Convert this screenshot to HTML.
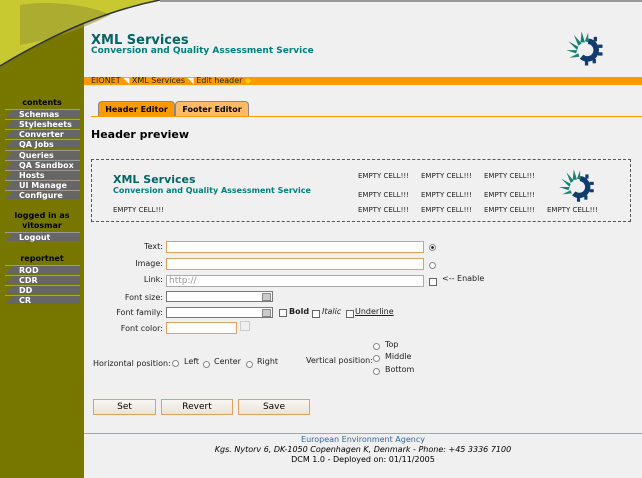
<!DOCTYPE html>
<html><head><style>
body{margin:0;width:642px;height:478px;background:#f0f0f0;font-family:Verdana,"DejaVu Sans",sans-serif;position:relative;overflow:hidden;font-size:8px}
.a{position:absolute}
.side{left:0;top:0;width:84px;height:478px;background:#777700}
.btn{position:absolute;left:5px;width:75px;height:9px;background:#666;color:#fff;font-weight:bold;font-size:8px;line-height:9px;padding-left:14px;box-sizing:border-box;border-top:1px solid #999}
.btn:before{content:"";position:absolute;left:0;top:0;border-left:8px solid #777700;border-bottom:8px solid transparent}
.lbl{position:absolute;left:0;width:84px;text-align:center;font-weight:bold;font-size:8px;color:#000}
.inp{position:absolute;background:#fff;border:1px solid #e0a060;height:12px;box-sizing:border-box}
.r{position:absolute;width:7px;height:7px;border-radius:50%;border:1px solid #888;background:#fff;box-sizing:border-box}
.c{position:absolute;width:8px;height:8px;border:1px solid #666;background:#fff;box-sizing:border-box}
.t{position:absolute;font-size:8px;color:#222;white-space:nowrap}
.ec{position:absolute;font-size:7px;color:#222;white-space:nowrap}
.b{position:absolute;top:399px;height:16px;border:1px solid #e0a060;background:linear-gradient(#f8f6f0,#e8e4da);font-size:9px;text-align:center;line-height:15px;box-sizing:border-box}
</style></head><body>
<div class="a side"></div>
<svg class="a" style="left:0;top:0" width="160" height="70"><path d="M0 0H160 C110 10 60 30 0 66Z" fill="#c8c830"/><path d="M20 5 C50 0 90 5 110 15 C80 30 50 40 20 45Z" fill="#9a9a30" opacity=".6"/><path d="M0 66 C60 30 110 10 160 0" stroke="#333" stroke-width="1.5" fill="none"/></svg>
<div class="a" style="left:160px;top:0;width:482px;height:2px;background:#999"></div>
<div class="a" style="left:91px;top:33px;font-size:13px;font-weight:bold;color:#006666">XML Services</div>
<div class="a" style="left:91px;top:46px;font-size:9px;font-weight:bold;color:#008080">Conversion and Quality Assessment Service</div>
<svg class="a" style="left:564px;top:29px" width="44" height="40" viewBox="0 0 40 36">
<g fill="#1a8070"><path d="M16 2l3 10-4 0z"/><path d="M9 5l7 8-3 2z"/><path d="M4 11l9 5-1 3z"/><path d="M2 19l10 0-1 3z"/><path d="M5 26l8-4 1 3z"/><path d="M22 3l0 9-3-1z"/></g>
<path d="M22 11a8 8 0 1 1-6 14" stroke="#123c6c" stroke-width="5" fill="none"/>
<g fill="#123c6c"><rect x="27" y="7" width="3" height="4"/><rect x="31" y="14" width="4" height="3"/><rect x="31" y="21" width="4" height="3"/><rect x="26" y="27" width="3" height="4"/><rect x="19" y="29" width="3" height="4"/></g></svg>
<div class="a" style="left:84px;top:77px;width:558px;height:8px;background:#ff9900"></div>
<div class="a" style="left:91px;top:76px;font-size:8px;color:#222;line-height:10px">EIONET <span style="color:#fff">◥</span> XML Services <span style="color:#fff">◥</span> Edit header <span style="color:#fc0">◆</span></div>
<div class="a" style="left:98px;top:101px;width:75px;height:15px;background:#ff9900;border:1px solid #888;border-bottom:0;border-radius:4px 4px 0 0;font-weight:bold;text-align:center;line-height:15px">Header Editor</div>
<div class="a" style="left:175px;top:101px;width:72px;height:15px;background:#ffbb66;border:1px solid #888;border-bottom:0;border-radius:4px 4px 0 0;font-weight:bold;text-align:center;line-height:15px">Footer Editor</div>
<div class="a" style="left:91px;top:116px;width:551px;height:1px;background:#ff9900"></div>
<div class="a" style="left:91px;top:128px;font-size:11px;font-weight:bold">Header preview</div>
<div class="a" style="left:91px;top:159px;width:538px;height:61px;border:1px dashed #555"></div>
<div class="a" style="left:113px;top:173px;font-size:11px;font-weight:bold;color:#006666">XML Services</div>
<div class="a" style="left:113px;top:186px;font-size:8px;font-weight:bold;color:#008080">Conversion and Quality Assessment Service</div>
<div class="ec" style="left:113px;top:206px">EMPTY CELL!!!</div>
<div class="ec" style="left:358px;top:172px">EMPTY CELL!!!</div><div class="ec" style="left:421px;top:172px">EMPTY CELL!!!</div><div class="ec" style="left:484px;top:172px">EMPTY CELL!!!</div>
<div class="ec" style="left:358px;top:191px">EMPTY CELL!!!</div><div class="ec" style="left:421px;top:191px">EMPTY CELL!!!</div><div class="ec" style="left:484px;top:191px">EMPTY CELL!!!</div>
<div class="ec" style="left:358px;top:206px">EMPTY CELL!!!</div><div class="ec" style="left:421px;top:206px">EMPTY CELL!!!</div><div class="ec" style="left:484px;top:206px">EMPTY CELL!!!</div><div class="ec" style="left:547px;top:206px">EMPTY CELL!!!</div>
<svg class="a" style="left:557px;top:167px" width="42" height="38" viewBox="0 0 40 36">
<g fill="#1a8070"><path d="M16 2l3 10-4 0z"/><path d="M9 5l7 8-3 2z"/><path d="M4 11l9 5-1 3z"/><path d="M2 19l10 0-1 3z"/><path d="M5 26l8-4 1 3z"/><path d="M22 3l0 9-3-1z"/></g>
<path d="M22 11a8 8 0 1 1-6 14" stroke="#123c6c" stroke-width="5" fill="none"/>
<g fill="#123c6c"><rect x="27" y="7" width="3" height="4"/><rect x="31" y="14" width="4" height="3"/><rect x="31" y="21" width="4" height="3"/><rect x="26" y="27" width="3" height="4"/><rect x="19" y="29" width="3" height="4"/></g></svg>
<div class="t" style="right:479px;top:242px">Text:</div><div class="inp" style="left:166px;top:241px;width:258px"></div><div class="r" style="left:429px;top:244px;background:radial-gradient(#222 35%,#fff 45%)"></div>
<div class="t" style="right:479px;top:259px">Image:</div><div class="inp" style="left:166px;top:258px;width:258px"></div><div class="r" style="left:429px;top:262px"></div>
<div class="t" style="right:479px;top:275px">Link:</div><div class="inp" style="left:166px;top:275px;width:258px;border-color:#aaa;color:#999;font-size:9px;padding-left:2px;line-height:10px">http://</div><div class="c" style="left:429px;top:278px"></div><div class="t" style="left:442px;top:274px">&lt;-- Enable</div>
<div class="t" style="right:479px;top:293px">Font size:</div><div class="inp" style="left:166px;top:291px;width:107px;height:11px;border-color:#777"></div><div class="a" style="left:262px;top:293px;width:9px;height:8px;background:#ccc;border:1px solid #888;box-sizing:border-box"></div>
<div class="t" style="right:479px;top:308px">Font family:</div><div class="inp" style="left:166px;top:307px;width:107px;height:11px;border-color:#777"></div><div class="a" style="left:262px;top:309px;width:9px;height:8px;background:#ccc;border:1px solid #888;box-sizing:border-box"></div>
<div class="c" style="left:279px;top:309px"></div><div class="t" style="left:289px;top:307px;font-weight:bold">Bold</div>
<div class="c" style="left:312px;top:310px"></div><div class="t" style="left:322px;top:307px;font-style:italic">Italic</div>
<div class="c" style="left:346px;top:310px"></div><div class="t" style="left:355px;top:307px;text-decoration:underline">Underline</div>
<div class="t" style="right:479px;top:324px">Font color:</div><div class="inp" style="left:166px;top:322px;width:71px"></div><div class="a" style="left:240px;top:321px;width:8px;height:8px;border:1px solid #ccc"></div>
<div class="t" style="left:93px;top:359px">Horizontal position:</div>
<div class="r" style="left:172px;top:360px"></div><div class="t" style="left:184px;top:357px">Left</div>
<div class="r" style="left:203px;top:361px"></div><div class="t" style="left:214px;top:357px">Center</div>
<div class="r" style="left:246px;top:361px"></div><div class="t" style="left:257px;top:357px">Right</div>
<div class="t" style="left:306px;top:356px">Vertical position:</div>
<div class="r" style="left:373px;top:343px"></div><div class="t" style="left:385px;top:340px">Top</div>
<div class="r" style="left:373px;top:355px"></div><div class="t" style="left:385px;top:352px">Middle</div>
<div class="r" style="left:373px;top:368px"></div><div class="t" style="left:385px;top:365px">Bottom</div>
<div class="b" style="left:93px;width:63px">Set</div>
<div class="b" style="left:161px;width:72px">Revert</div>
<div class="b" style="left:238px;width:72px">Save</div>
<div class="a" style="left:84px;top:433px;width:558px;height:1px;background:#c8a070"></div>
<div class="a" style="left:84px;top:435px;width:558px;text-align:center;font-size:8px;line-height:10px"><span style="color:#336699">European Environment Agency</span><br><i>Kgs. Nytorv 6, DK-1050 Copenhagen K, Denmark - Phone: +45 3336 7100</i><br>DCM 1.0 - Deployed on: 01/11/2005</div>
<div class="lbl" style="top:98px">contents</div>
<div class="btn" style="top:109px">Schemas</div><div class="btn" style="top:119px">Stylesheets</div><div class="btn" style="top:129px">Converter</div><div class="btn" style="top:139px">QA Jobs</div><div class="btn" style="top:150px">Queries</div><div class="btn" style="top:160px">QA Sandbox</div><div class="btn" style="top:170px">Hosts</div><div class="btn" style="top:180px">UI Manage</div><div class="btn" style="top:190px">Configure</div>
<div class="lbl" style="top:211px;line-height:10px">logged in as<br>vitosmar</div>
<div class="btn" style="top:232px">Logout</div>
<div class="lbl" style="top:254px">reportnet</div>
<div class="btn" style="top:265px">ROD</div><div class="btn" style="top:275px">CDR</div><div class="btn" style="top:285px">DD</div><div class="btn" style="top:295px">CR</div>
</body></html>
